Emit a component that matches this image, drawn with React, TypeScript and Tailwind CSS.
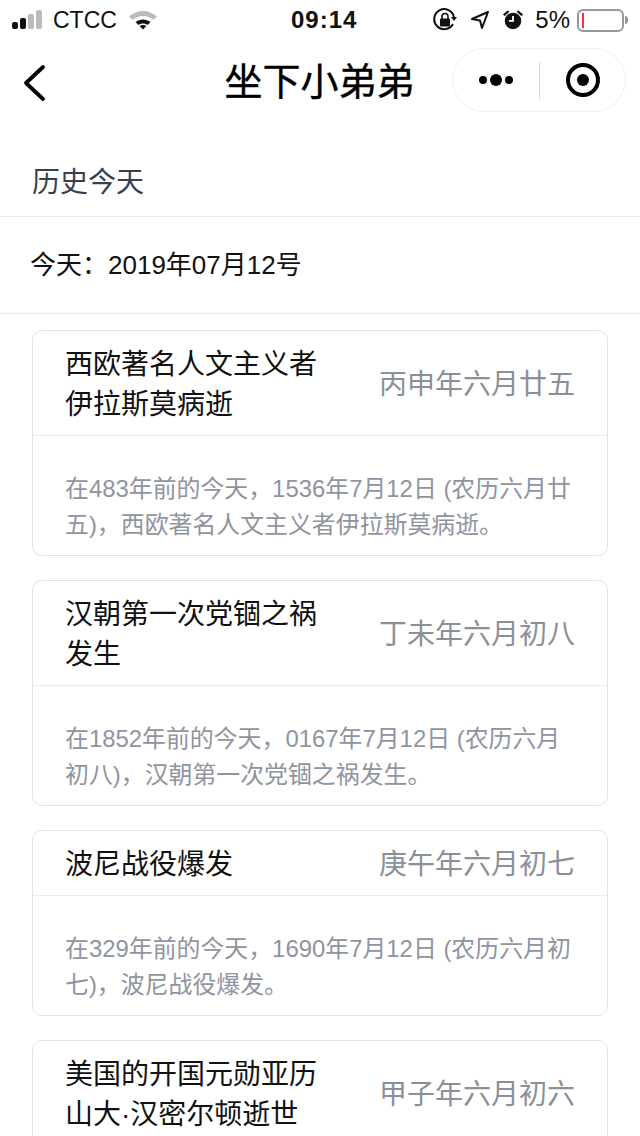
import React from "react";

const font = { fontFamily: '"Liberation Sans","Noto Sans CJK SC",sans-serif' };

const cards = [
  { t: "西欧著名人文主义者伊拉斯莫病逝", d: "丙申年六月廿五", b: "在483年前的今天，1536年7月12日 (农历六月廿五)，西欧著名人文主义者伊拉斯莫病逝。" },
  { t: "汉朝第一次党锢之祸发生", d: "丁未年六月初八", b: "在1852年前的今天，0167年7月12日 (农历六月初八)，汉朝第一次党锢之祸发生。" },
  { t: "波尼战役爆发", d: "庚午年六月初七", b: "在329年前的今天，1690年7月12日 (农历六月初七)，波尼战役爆发。" },
  { t: "美国的开国元勋亚历山大·汉密尔顿逝世", d: "甲子年六月初六", b: "在215年前的今天，1804年7月12日 (农历六月初六)，美国的开国元勋亚历山大·汉密尔顿逝世。" },
];

function StatusBar() {
  return (
    <div className="h-[40px] flex items-center justify-between pl-[12px] pr-[12px] text-[23px] text-[#111] relative shrink-0">
      <div className="flex items-center">
        <svg width="34" height="20" viewBox="0 0 34 20">
          <rect x="0" y="12" width="6" height="7" rx="2" fill="#111" />
          <rect x="8" y="8" width="6" height="11" rx="2" fill="#111" />
          <rect x="16" y="4" width="6" height="15" rx="2" fill="#bbb" />
          <rect x="24" y="0" width="6" height="19" rx="2" fill="#bbb" />
        </svg>
        <span className="ml-[7px] leading-none">CTCC</span>
        <svg className="ml-[11px]" width="30" height="22" viewBox="0 0 30 22">
          <path d="M1 7.5 C9 0 21 0 29 7.5 L25.5 11 C19 5.5 11 5.5 4.5 11 Z" fill="#bbb" />
          <path d="M7.5 13 C12 9.5 18 9.5 22.5 13 L19.5 16 C17 14 13 14 10.5 16 Z" fill="#111" />
          <path d="M11.5 17 C13.5 15.5 16.5 15.5 18.5 17 L15 20.5 Z" fill="#111" />
        </svg>
      </div>
      <div className="absolute left-[291px] top-[7px] leading-[26px] font-bold text-[24px] tracking-[1px]">09:14</div>
      <div className="flex items-center">
        <svg width="24" height="24" viewBox="0 0 24 24" fill="none">
          <path d="M20 16 A10 10 0 1 1 21 9" stroke="#111" strokeWidth="2" />
          <path d="M18 9 L24 9 L21 13 Z" fill="#111" />
          <rect x="7" y="10.5" width="10" height="8" rx="1" fill="#111" />
          <path d="M9 11 V8.5 a3 3 0 0 1 6 0 V11" stroke="#111" strokeWidth="1.6" />
        </svg>
        <svg className="ml-[13px]" width="20" height="20" viewBox="0 0 20 20" fill="none">
          <path d="M18 2 L2 9 L10 10.5 L12 18 Z" stroke="#111" strokeWidth="2" strokeLinejoin="round" />
        </svg>
        <svg className="ml-[12px]" width="22" height="22" viewBox="0 0 24 24">
          <circle cx="12" cy="13" r="9" fill="#111" />
          <path d="M12 7.5 V13 H7.5" stroke="#fff" strokeWidth="2" fill="none" />
          <path d="M1 6 L6 1.5 L8 3 L3 7.5 Z M23 6 L18 1.5 L16 3 L21 7.5 Z" fill="#111" />
        </svg>
        <span className="ml-[11px] leading-none text-[24px]">5%</span>
        <div className="ml-[7px] w-[47px] h-[23px] rounded-[6px] border-2 border-[#999] flex items-center pl-[3px]">
          <div className="w-[2px] h-[15px] bg-[#f33]" />
        </div>
        <div className="ml-[1px] w-[3px] h-[8px] bg-[#999] rounded-r-[3px]" />
      </div>
    </div>
  );
}

function NavBar() {
  return (
    <div className="h-[88px] relative flex items-center justify-center shrink-0">
      <svg className="absolute left-[22px] top-[24px]" width="24" height="38" viewBox="0 0 24 38" fill="none">
        <path d="M21 3 L4 19 L21 35" stroke="#000" strokeWidth="3.8" strokeLinecap="round" strokeLinejoin="round" />
      </svg>
      <div className="text-[38px] leading-[44px] font-normal text-black mb-[4px] mr-[1px] [-webkit-text-stroke:0.4px_black]">坐下小弟弟</div>
      <div className="absolute left-[452px] top-[8px] w-[174px] h-[64px] rounded-full border border-[#eeeeee] flex items-center">
        <div className="w-[86px] flex items-center justify-center gap-[3px]">
          <span className="w-[8px] h-[8px] rounded-full bg-black" />
          <span className="w-[12px] h-[12px] rounded-full bg-black" />
          <span className="w-[8px] h-[8px] rounded-full bg-black" />
        </div>
        <div className="w-px h-[37px] bg-[#d6d6d6]" />
        <div className="flex-1 flex items-center justify-center">
          <div className="w-[34px] h-[34px] rounded-full border-[4px] border-black flex items-center justify-center">
            <div className="w-[12px] h-[12px] rounded-full bg-black" />
          </div>
        </div>
      </div>
    </div>
  );
}

function Card({ t, d, b }: { t: string; d: string; b: string }) {
  return (
    <div className="mx-[32px] mb-[24px] border border-[#e2e2e6] rounded-[10px] shrink-0">
      <div className="flex items-center justify-between pl-[32px] pr-[32px] pt-[14px] pb-[10px] border-b border-[#ececec]">
        <div className="w-[254px] text-[28px] leading-[40px] text-[#111]">{t}</div>
        <div className="text-[28px] leading-[40px] text-[#8b8f99] whitespace-nowrap">{d}</div>
      </div>
      <div className="pl-[32px] pr-[29px] pt-[35px] pb-[12px] text-[23.9px] leading-[36px] text-[#9093a0]">{b}</div>
    </div>
  );
}

export default function App() {
  return (
    <div className="w-[640px] h-[1136px] bg-white overflow-hidden flex flex-col" style={font}>
      <StatusBar />
      <NavBar />
      <div className="h-[89px] flex items-center pl-[32px] pt-[22px] border-b border-[#ececec] text-[28px] text-[#3a3f4d] shrink-0">历史今天</div>
      <div className="h-[97px] flex items-center pl-[30px] border-b border-[#ececec] text-[26px] text-[#111] mb-[16px] shrink-0">今天：2019年07月12号</div>
      {cards.map((c) => (
        <Card key={c.t} {...c} />
      ))}
    </div>
  );
}
